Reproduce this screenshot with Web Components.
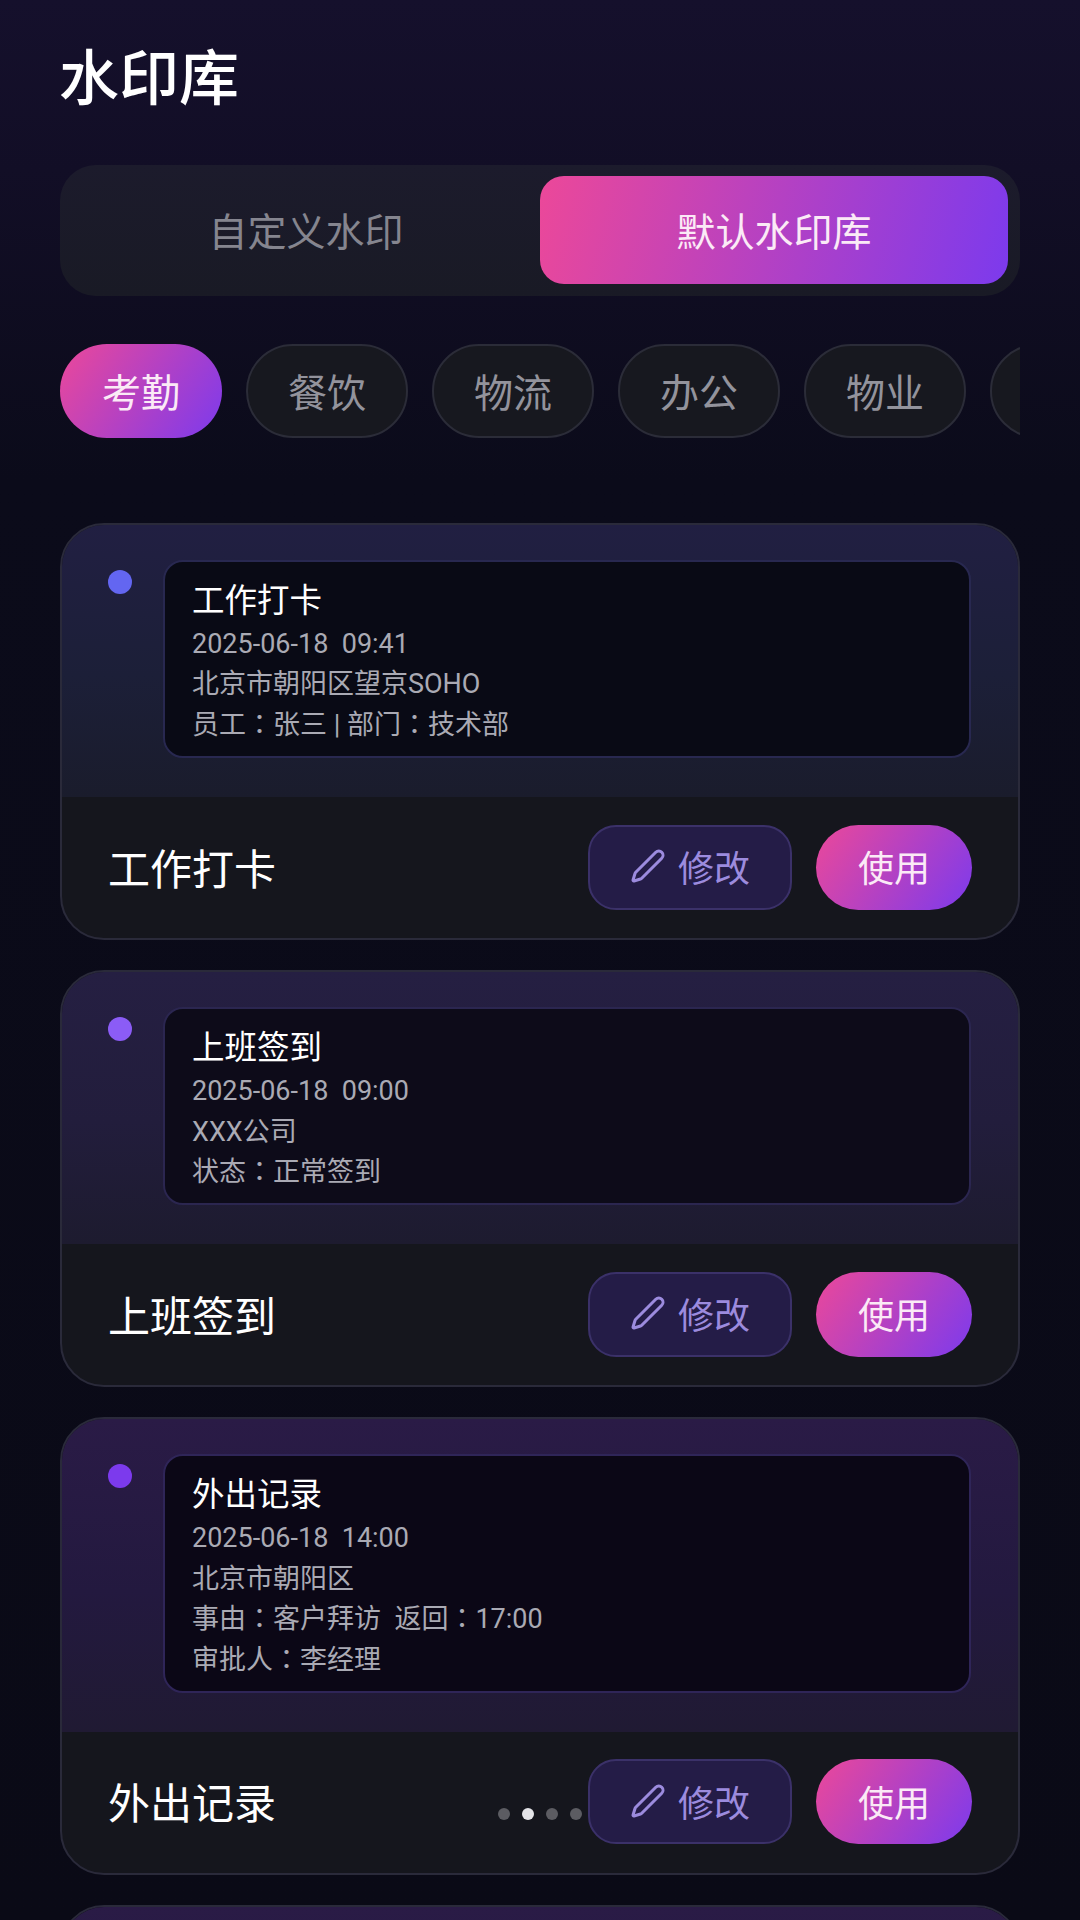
<!DOCTYPE html>
<html lang="zh-CN">
<head>
<meta charset="utf-8">
<title>水印库</title>
<style>
  html, body { margin: 0; height: 1920px; overflow: hidden; background: #0a0a16; }
  body { font-family: Roboto, "Noto Sans CJK SC", sans-serif; }
  .c { font-family: "Noto Sans CJK TC", sans-serif; line-height: 0; }
</style>
</head>
<body>
<wm-page>
  <wm-tabs>
    <wm-tab>自定义水印</wm-tab>
    <wm-tab active>默认水印库</wm-tab>
  </wm-tabs>
  <wm-chips>
    <wm-chip active>考勤</wm-chip>
    <wm-chip>餐饮</wm-chip>
    <wm-chip>物流</wm-chip>
    <wm-chip>办公</wm-chip>
    <wm-chip>物业</wm-chip>
    <wm-chip></wm-chip>
  </wm-chips>
  <wm-card name="工作打卡" dot="#6366f1" top="#211f42" mid="#1c1f38" end="#1a1c2c" inner="#090a15" edge="#282850">
    <wm-line strong>工作打卡</wm-line>
    <wm-line>2025-06-18  09:41</wm-line>
    <wm-line>北京市朝阳区望京SOHO</wm-line>
    <wm-line>员工<span class="c" lang="zh-TW">：</span>张三 | 部门<span class="c" lang="zh-TW">：</span>技术部</wm-line>
  </wm-card>
  <wm-card name="上班签到" dot="#8b5cf6" top="#251f42" mid="#221d3c" end="#1d1b2f" inner="#0d0b19" edge="#2b2650">
    <wm-line strong>上班签到</wm-line>
    <wm-line>2025-06-18  09:00</wm-line>
    <wm-line>XXX公司</wm-line>
    <wm-line>状态<span class="c" lang="zh-TW">：</span>正常签到</wm-line>
  </wm-card>
  <wm-card name="外出记录" dot="#7c3aed" top="#2a1b46" mid="#23193f" end="#201a33" inner="#0b0716" edge="#2f2558" pager>
    <wm-line strong>外出记录</wm-line>
    <wm-line>2025-06-18  14:00</wm-line>
    <wm-line>北京市朝阳区</wm-line>
    <wm-line>事由<span class="c" lang="zh-TW">：</span>客户拜访  返回<span class="c" lang="zh-TW">：</span>17:00</wm-line>
    <wm-line>审批人<span class="c" lang="zh-TW">：</span>李经理</wm-line>
  </wm-card>
  <wm-card dot="#ec4899" top="#2a1b46" mid="#23193f" end="#201a33" inner="#0b0716" edge="#2f2558"></wm-card>
</wm-page>

<script>
const GRADIENT = "linear-gradient(105deg, #ec4899 0%, #7c3aed 100%)";

class WmPage extends HTMLElement {
  constructor() {
    super();
    this.attachShadow({ mode: "open" });
    this.shadowRoot.innerHTML = `
    <style>
      :host {
        display: block;
        height: 1920px;
        box-sizing: border-box;
        padding: 0 60px;
        overflow: hidden;
        background: linear-gradient(180deg, #15102c 0px, #120e26 170px, #0b0b1a 480px, #0a0a16 100%);
        color: #fff;
      }
      h1 {
        margin: 0 0 0 -1px;
        height: 165px;
        box-sizing: border-box;
        padding-top: 37px;
        font-size: 60px;
        line-height: 86px;
        font-weight: 500;
      }
    </style>
    <h1>水印库</h1>
    <slot></slot>`;
  }
}

class WmTabs extends HTMLElement {
  constructor() {
    super();
    this.attachShadow({ mode: "open" });
    this.shadowRoot.innerHTML = `
    <style>
      :host {
        display: grid;
        grid-template-columns: 1fr 1fr;
        height: 131px;
        box-sizing: border-box;
        padding: 11px 12px 12px;
        border-radius: 36px;
        background: linear-gradient(180deg, #1c1b2c, #191a25);
      }
    </style>
    <slot></slot>`;
  }
}

class WmTab extends HTMLElement {
  constructor() {
    super();
    this.attachShadow({ mode: "open" });
    this.shadowRoot.innerHTML = `
    <style>
      :host {
        display: flex;
        align-items: center;
        justify-content: center;
        padding-bottom: 2px;
        border-radius: 24px;
        font-size: 39px;
        color: #85858f;
      }
      :host([active]) {
        background: ${GRADIENT};
        color: #fbeaf6;
      }
    </style>
    <slot></slot>`;
  }
}

class WmChips extends HTMLElement {
  constructor() {
    super();
    this.attachShadow({ mode: "open" });
    this.shadowRoot.innerHTML = `
    <style>
      :host {
        display: flex;
        gap: 24px;
        height: 94px;
        margin: 48px 0 85px;
        overflow: hidden;
      }
    </style>
    <slot></slot>`;
  }
}

class WmChip extends HTMLElement {
  constructor() {
    super();
    this.attachShadow({ mode: "open" });
    this.shadowRoot.innerHTML = `
    <style>
      :host {
        flex: 0 0 162px;
        display: flex;
        align-items: center;
        justify-content: center;
        box-sizing: border-box;
        padding-bottom: 2px;
        border: 2px solid #2b2c38;
        border-radius: 47px;
        background: #17181f;
        font-size: 39px;
        color: #93939c;
      }
      :host([active]) {
        border: 0;
        background: linear-gradient(125deg, #ec4899 0%, #7c3aed 100%);
        color: #fbeaf6;
      }
    </style>
    <slot></slot>`;
  }
}

class WmLine extends HTMLElement {
  constructor() {
    super();
    this.attachShadow({ mode: "open" });
    this.shadowRoot.innerHTML = `
    <style>
      :host {
        display: block;
        height: 40.4px;
        font-size: 27px;
        line-height: 40px;
        color: #aaaab4;
      }
      :host([strong]) {
        height: 46px;
        font-size: 32.5px;
        line-height: 46px;
        color: #fff;
      }
      slot {
        display: block;
        white-space: pre;
      }
    </style>
    <slot></slot>`;
  }
}

class WmCard extends HTMLElement {
  constructor() {
    super();
    const name = this.getAttribute("name");
    const dot = this.getAttribute("dot");
    const top = this.getAttribute("top");
    const mid = this.getAttribute("mid");
    const end = this.getAttribute("end");
    const inner = this.getAttribute("inner");
    const edge = this.getAttribute("edge");
    const pager = this.hasAttribute("pager")
      ? `<div class="pager"><i></i><i class="on"></i><i></i><i></i></div>`
      : "";
    // the last card only peeks in at the bottom of the screen, so no footer for it
    const foot = name
      ? `<div class="foot">
          <span class="name">${name}</span>
          <div class="actions">
            <button class="edit" type="button">
              <svg viewBox="0 0 24 24"><path d="M21.174 6.812a1 1 0 0 0-3.986-3.987L3.842 16.174a2 2 0 0 0-.5.83l-1.321 4.352a.5.5 0 0 0 .623.622l4.353-1.32a2 2 0 0 0 .83-.497z"/></svg>
              修改
            </button>
            <button class="use" type="button">使用</button>
          </div>
        </div>`
      : "";
    this.attachShadow({ mode: "open" });
    this.shadowRoot.innerHTML = `
    <style>
      :host {
        display: block;
        position: relative;
        margin-bottom: 30px;
        border: 2px solid #2a2a3a;
        border-radius: 44px;
        overflow: hidden;
        background: #15161d;
      }
      .top {
        display: flex;
        gap: 31px;
        padding: 35px 47px 39px 46px;
        background: linear-gradient(180deg, ${top} 0%, ${mid} 55%, ${end} 100%);
      }
      .dot {
        flex: none;
        width: 24px;
        height: 24px;
        margin-top: 10px;
        border-radius: 50%;
        background: ${dot};
      }
      .preview {
        flex: 1;
        min-width: 0;
        min-height: 166px;
        padding: 16px 27px 11px;
        border: 2px solid ${edge};
        border-radius: 20px;
        background: ${inner};
      }
      .foot {
        display: flex;
        align-items: center;
        justify-content: space-between;
        height: 141px;
        box-sizing: border-box;
        padding: 0 46px 1px;
      }
      .name {
        margin-bottom: 2px;
        font-size: 42px;
        color: #fff;
      }
      .actions {
        display: flex;
        gap: 24px;
      }
      button {
        display: flex;
        align-items: center;
        justify-content: center;
        height: 85px;
        box-sizing: border-box;
        margin: 0;
        padding: 0 0 2px;
        font: inherit;
        font-size: 36px;
        cursor: pointer;
      }
      .edit {
        width: 204px;
        gap: 12px;
        border: 2px solid #3b3169;
        border-radius: 28px;
        background: #241c47;
        color: #9c8bde;
      }
      .edit svg {
        width: 36px;
        height: 36px;
        fill: none;
        stroke: currentColor;
        stroke-width: 2;
        stroke-linejoin: round;
      }
      .use {
        width: 156px;
        border: 0;
        border-radius: 43px;
        background: linear-gradient(125deg, #ec4899 0%, #7c3aed 100%);
        color: #fbeaf6;
      }
      .pager {
        position: absolute;
        left: 436px;
        bottom: 53px;
        display: flex;
        gap: 12px;
      }
      .pager i {
        width: 12px;
        height: 12px;
        border-radius: 50%;
        background: #5c5c62;
      }
      .pager i.on { background: #e4e4e8; }
    </style>
    <div class="top">
      <span class="dot"></span>
      <div class="preview"><slot></slot></div>
    </div>
    ${foot}
    ${pager}`;
  }
}

customElements.define("wm-page", WmPage);
customElements.define("wm-tabs", WmTabs);
customElements.define("wm-tab", WmTab);
customElements.define("wm-chips", WmChips);
customElements.define("wm-chip", WmChip);
customElements.define("wm-line", WmLine);
customElements.define("wm-card", WmCard);
</script>
</body>
</html>
